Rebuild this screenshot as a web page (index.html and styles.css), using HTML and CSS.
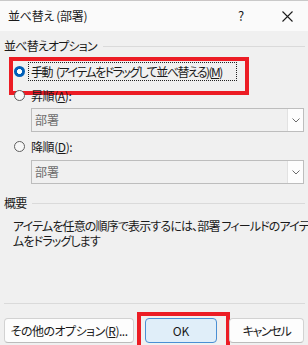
FILE: index.html
```html
<!DOCTYPE html>
<html lang="ja">
<head>
<meta charset="utf-8">
<link rel="stylesheet" href="styles.css">
</head>
<body>
<div class="dialog">
  <div class="titlebar">
    <span class="title">並べ替え (部署)</span>
    <span class="help">?</span>
    <span class="close"><svg width="11" height="11" viewBox="0 0 11 11"><path d="M0.5 0.5 L10.5 10.5 M10.5 0.5 L0.5 10.5" stroke="#1b1b1b" stroke-width="1.1" fill="none"/></svg></span>
  </div>
  <div class="content">
    <div class="group-head"><span class="head-text">並べ替えオプション</span><span class="rule"></span></div>
    <div class="opt opt-first marked">
      <span class="radio checked"></span>
      <span class="label focus">手動 (アイテムをドラッグして並べ替える)(<u>M</u>)</span>
    </div>
    <div class="opt opt-asc">
      <span class="radio"></span>
      <span class="label">昇順(<u>A</u>):</span>
    </div>
    <div class="combo combo-asc">
      <span class="value">部署</span>
      <span class="drop"><svg width="8" height="5" viewBox="0 0 8 5"><path d="M0.5 0.5 L4 4 L7.5 0.5" stroke="#6b6b6b" stroke-width="1" fill="none"/></svg></span>
    </div>
    <div class="opt opt-desc">
      <span class="radio"></span>
      <span class="label">降順(<u>D</u>):</span>
    </div>
    <div class="combo combo-desc">
      <span class="value">部署</span>
      <span class="drop"><svg width="8" height="5" viewBox="0 0 8 5"><path d="M0.5 0.5 L4 4 L7.5 0.5" stroke="#6b6b6b" stroke-width="1" fill="none"/></svg></span>
    </div>
    <div class="group-head group-summary"><span class="head-text">概要</span><span class="rule"></span></div>
    <p class="desc"><span class="desc-line">アイテムを任意の順序で表示するには、部署 フィールドのアイテ</span><span class="desc-line">ムをドラッグします</span></p>
  </div>
  <div class="footer">
    <button class="btn btn-more">その他のオプション(<u>R</u>)...</button>
    <button class="btn btn-ok marked-ok">OK</button>
    <button class="btn btn-cancel">キャンセル</button>
  </div>
</div>
</body>
</html>
```
FILE: styles.css
```css
* { box-sizing: border-box; }
html, body { margin: 0; padding: 0; }
body {
  width: 308px;
  height: 345px;
  overflow: hidden;
  background: #f0f0f0;
  font-family: "Noto Sans CJK JP", "Noto Sans", sans-serif;
  font-feature-settings: "palt";
  font-size: 12px;
  color: #1a1a1a;
}
.dialog {
  display: flex;
  flex-direction: column;
  height: 345px;
}
.titlebar {
  height: 31px;
  flex: none;
  background: #fafafa;
  border-top: 1px solid #c9c9c9;
  display: flex;
  align-items: center;
  padding-left: 8px;
}
.title { flex: 1; line-height: 16px; letter-spacing: -0.3px; }
.help { width: 10px; margin-right: 36px; font-size: 13px; line-height: 16px; text-align: center; }
.close { width: 11px; height: 11px; margin-right: 15px; display: flex; }
.content {
  padding: 0 3px 0 4px;
  display: flex;
  flex-direction: column;
}
.group-head {
  margin-top: 7px;
  height: 16px;
  display: flex;
  align-items: center;
  line-height: 16px;
}
.head-text { letter-spacing: -0.8px; }
.rule {
  flex: 1;
  height: 1px;
  background: #dadada;
  margin-left: 6px;
}
.group-summary { margin-top: 11px; }
.opt {
  height: 19px;
  display: flex;
  align-items: center;
  position: relative;
}
.opt-first { margin-top: 8px; }
.opt-asc { margin-top: 5px; }
.opt-desc { margin-top: 5px; }
.radio {
  width: 11px;
  height: 11px;
  margin-left: 10px;
  border-radius: 50%;
  border: 1px solid #5f5f5f;
  background: #f7f7f7;
  flex: none;
}
.radio.checked {
  border: none;
  background: radial-gradient(circle, #ffffff 0 2.2px, #005fb8 2.7px);
}
.label {
  margin-left: 3px;
  height: 19px;
  line-height: 17px;
  padding: 0 2px;
  border: 1px solid transparent;
  white-space: nowrap;
  letter-spacing: -0.4px;
}
.label.focus {
  border: 1px dotted #222;
  width: 209px;
  letter-spacing: -1.55px;
  word-spacing: 3px;
  overflow: hidden;
}
.marked::after {
  content: "";
  position: absolute;
  left: 5px;
  top: -5px;
  width: 232px;
  height: 30px;
  border: 4px solid #ec1c24;
}
.combo {
  height: 24px;
  margin-left: 27px;
  margin-right: 1px;
  border: 1px solid #bdbdbd;
  display: flex;
  align-items: center;
  background: #f0f0f0;
}
.combo-asc { margin-top: 3px; }
.combo-desc { margin-top: 4px; }
.value { flex: 1; padding-left: 3px; color: #6d6d6d; line-height: 16px; }
.drop {
  width: 16px;
  height: 22px;
  background: #fdfdfd;
  border-left: 1px solid #e2e2e2;
  display: flex;
  align-items: center;
  justify-content: center;
}
.desc {
  margin: 7px 0 0 9px;
  display: flex;
  flex-direction: column;
  white-space: nowrap;
  letter-spacing: -0.85px;
}
.desc-line {
  height: 15px;
  line-height: 15px;
  overflow: visible;
}
.footer {
  margin: auto 3px 0 4px;
  border-top: 1px solid #dadada;
  padding-top: 14px;
  padding-bottom: 2px;
  display: flex;
  height: 42px;
}
.btn {
  height: 25px;
  margin: 0;
  font: inherit;
  color: #1a1a1a;
  background: #fdfdfd;
  border: 1px solid #d2d2d2;
  border-bottom-color: #bcbcbc;
  border-radius: 4px;
  padding: 0;
  line-height: 22px;
  text-align: center;
  position: relative;
  flex: none;
}
.btn-more { width: 130px; letter-spacing: -0.5px; }
.btn-ok {
  width: 72px;
  margin-left: 11px;
  background: #e0eef9;
  border: 1px solid #4a8fd4;
}
.btn-cancel { width: 75px; margin-left: 12px; letter-spacing: -1.3px; }
.marked-ok::after {
  content: "";
  position: absolute;
  left: -9px;
  top: -7px;
  width: 85px;
  height: 40px;
  border: 4px solid #ec1c24;
}
```
